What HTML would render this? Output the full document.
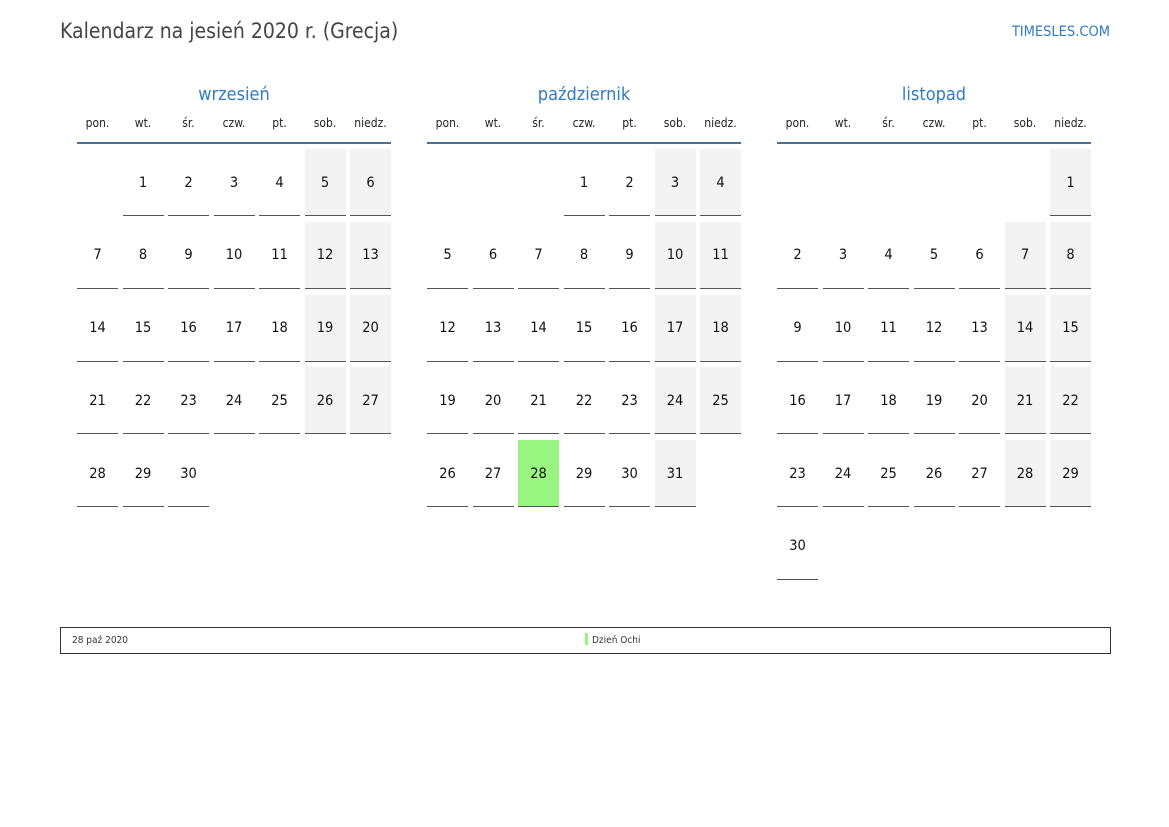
<!DOCTYPE html>
<html><head><meta charset="utf-8"><style>
*{margin:0;padding:0;box-sizing:border-box}
body{width:1169px;height:827px;background:#fff;font-family:"DejaVu Sans Condensed","DejaVu Sans","Liberation Sans",sans-serif;font-stretch:condensed;position:relative;overflow:hidden}
.title{position:absolute;left:60px;top:19px;font-size:21px;color:#444}
.logo{position:absolute;right:59px;top:24px;font-size:14.5px;color:#2f7cc4}
.m{position:absolute;top:84px;width:314px}
.mn{text-align:center;font-size:18px;color:#2f7cc4;height:22px;line-height:22px}
.dn{display:grid;grid-template-columns:repeat(7,41px);column-gap:4.5px;font-size:12px;color:#222;text-align:center;margin-top:10px;height:20px}
.bl{height:2px;background:#4b6d96;margin-top:6px}
.g{display:grid;grid-template-columns:repeat(7,41px);column-gap:4.5px;row-gap:5.8px;margin-top:5px;grid-auto-rows:67px}
.g div.d{border-bottom:1px solid #555;font-size:14.5px;color:#111;display:flex;align-items:center;justify-content:center;padding-top:1px}
.g div.w{background:#f3f3f3}
.g div.h{background:#98f57f}
.foot{position:absolute;left:60px;top:627px;width:1051px;height:27px;border:1.5px solid #333;font-size:10px;color:#333}
.foot span{position:absolute;top:7px}
.bar{position:absolute;left:524px;top:5px;width:3px;height:12px;background:#98f57f}
</style></head><body>
<div class="title">Kalendarz na jesień 2020 r. (Grecja)</div>
<div class="logo">TIMESLES.COM</div>

<div class="m" style="left:77px">
<div class="mn">wrzesień</div>
<div class="dn"><div>pon.</div><div>wt.</div><div>śr.</div><div>czw.</div><div>pt.</div><div>sob.</div><div>niedz.</div></div>
<div class="bl"></div>
<div class="g">
<div></div><div class="d">1</div><div class="d">2</div><div class="d">3</div><div class="d">4</div><div class="d w">5</div><div class="d w">6</div>
<div class="d">7</div><div class="d">8</div><div class="d">9</div><div class="d">10</div><div class="d">11</div><div class="d w">12</div><div class="d w">13</div>
<div class="d">14</div><div class="d">15</div><div class="d">16</div><div class="d">17</div><div class="d">18</div><div class="d w">19</div><div class="d w">20</div>
<div class="d">21</div><div class="d">22</div><div class="d">23</div><div class="d">24</div><div class="d">25</div><div class="d w">26</div><div class="d w">27</div>
<div class="d">28</div><div class="d">29</div><div class="d">30</div>
</div></div>

<div class="m" style="left:427px">
<div class="mn">październik</div>
<div class="dn"><div>pon.</div><div>wt.</div><div>śr.</div><div>czw.</div><div>pt.</div><div>sob.</div><div>niedz.</div></div>
<div class="bl"></div>
<div class="g">
<div></div><div></div><div></div><div class="d">1</div><div class="d">2</div><div class="d w">3</div><div class="d w">4</div>
<div class="d">5</div><div class="d">6</div><div class="d">7</div><div class="d">8</div><div class="d">9</div><div class="d w">10</div><div class="d w">11</div>
<div class="d">12</div><div class="d">13</div><div class="d">14</div><div class="d">15</div><div class="d">16</div><div class="d w">17</div><div class="d w">18</div>
<div class="d">19</div><div class="d">20</div><div class="d">21</div><div class="d">22</div><div class="d">23</div><div class="d w">24</div><div class="d w">25</div>
<div class="d">26</div><div class="d">27</div><div class="d h">28</div><div class="d">29</div><div class="d">30</div><div class="d w">31</div>
</div></div>

<div class="m" style="left:777px">
<div class="mn">listopad</div>
<div class="dn"><div>pon.</div><div>wt.</div><div>śr.</div><div>czw.</div><div>pt.</div><div>sob.</div><div>niedz.</div></div>
<div class="bl"></div>
<div class="g">
<div></div><div></div><div></div><div></div><div></div><div></div><div class="d w">1</div>
<div class="d">2</div><div class="d">3</div><div class="d">4</div><div class="d">5</div><div class="d">6</div><div class="d w">7</div><div class="d w">8</div>
<div class="d">9</div><div class="d">10</div><div class="d">11</div><div class="d">12</div><div class="d">13</div><div class="d w">14</div><div class="d w">15</div>
<div class="d">16</div><div class="d">17</div><div class="d">18</div><div class="d">19</div><div class="d">20</div><div class="d w">21</div><div class="d w">22</div>
<div class="d">23</div><div class="d">24</div><div class="d">25</div><div class="d">26</div><div class="d">27</div><div class="d w">28</div><div class="d w">29</div>
<div class="d">30</div>
</div></div>

<div class="foot"><span style="left:11px">28 paź 2020</span><div class="bar"></div><span style="left:531px">Dzień Ochi</span></div>
</body></html>
